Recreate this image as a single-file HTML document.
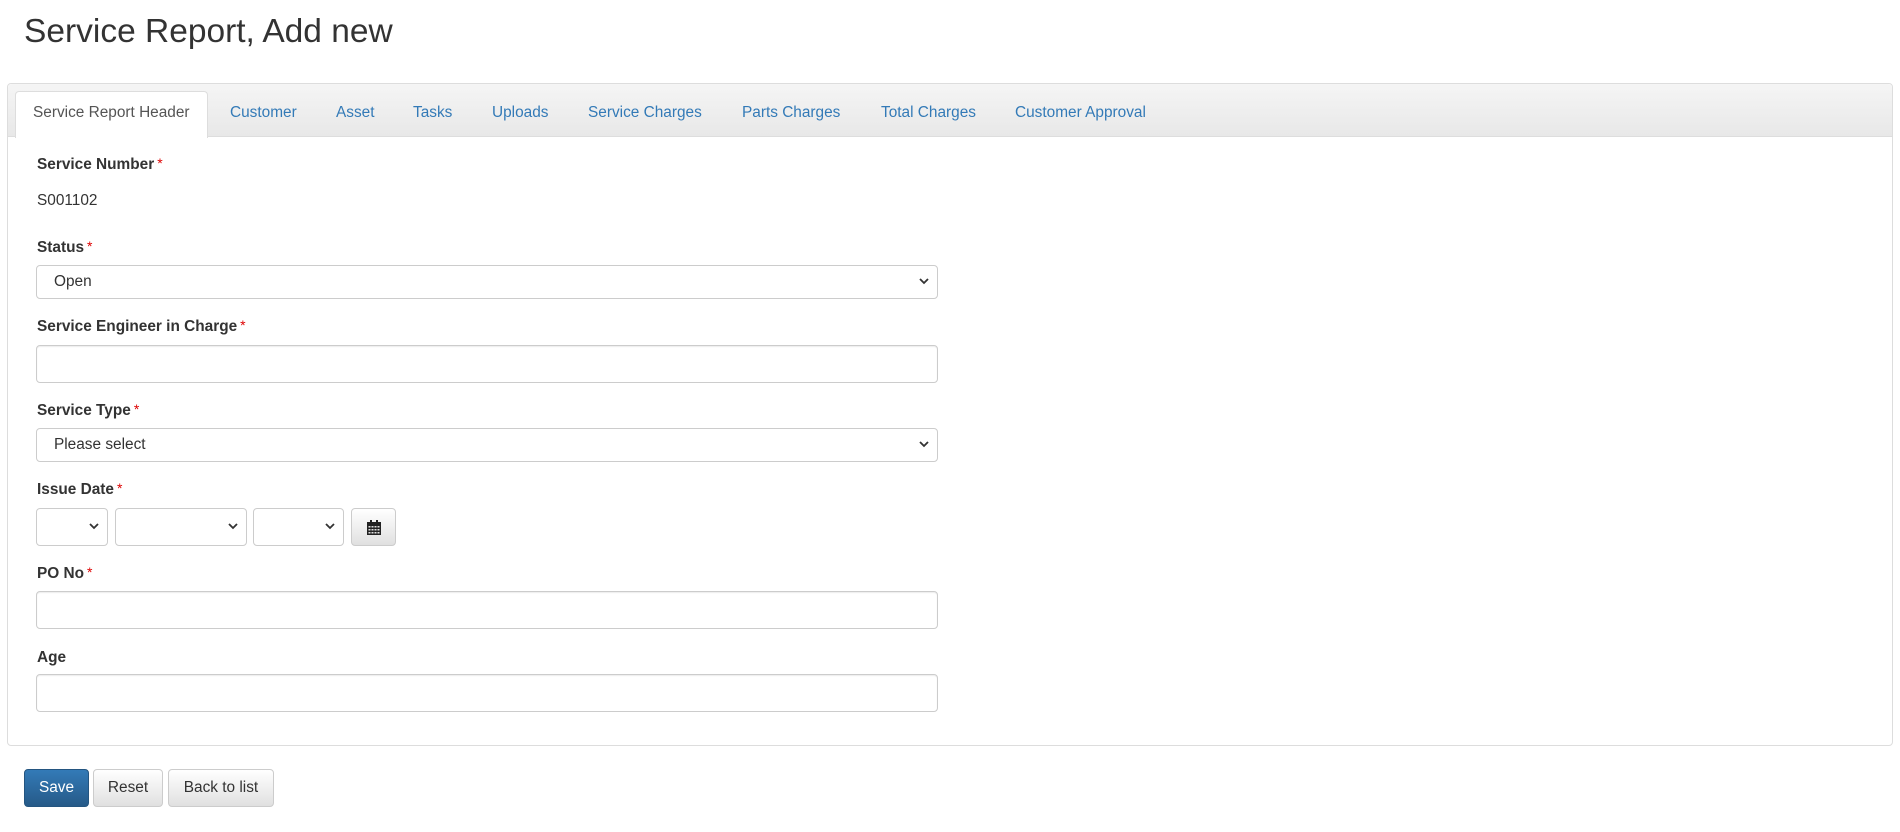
<!DOCTYPE html>
<html><head><meta charset="utf-8"><style>
*{box-sizing:border-box;margin:0;padding:0}
body{width:1900px;height:832px;background:#fff;font-family:"Liberation Sans",Arial,sans-serif;font-size:15.4px;color:#333;position:relative;overflow:hidden}
.a{position:absolute}
h1{position:absolute;left:24px;top:12px;font-size:33.5px;font-weight:normal;color:#333;line-height:40px}
.panel{left:7px;top:83px;width:1886px;height:663px;border:1px solid #ddd;border-radius:4px}
.bar{left:8px;top:84px;width:1884px;height:53px;background:linear-gradient(#f5f5f5,#e8e8e8);border-bottom:1px solid #ddd;border-radius:4px 4px 0 0}
.tab{top:91px;height:47px;background:#fff;border:1px solid #ddd;border-bottom:none;border-radius:4px 4px 0 0;left:15px;width:193px}
.t{top:103px;color:#337ab7;line-height:20px}
.lbl{font-weight:bold;left:37px;line-height:20px}
.lbl i{color:#d00;font-style:normal;font-weight:normal;font-size:14px;vertical-align:top;margin-left:3px;position:relative;top:-2px}
.in{border:1px solid #ccc;border-radius:4px;background:#fff;box-shadow:inset 0 1px 1px rgba(0,0,0,.075)}
.sel{border:1px solid #ccc;border-radius:4px;background:#fff;padding-left:17px;line-height:32px}
.chev{position:absolute;right:8px;top:50%;margin-top:-4px}
.btn{top:769px;height:38px;border-radius:4px;line-height:36px;text-align:center;border:1px solid #ccc;background:linear-gradient(#fff,#e0e0e0);color:#333}
</style></head><body>
<h1>Service Report, Add new</h1>
<div class="a panel"></div>
<div class="a bar"></div>
<div class="a tab"></div>
<div class="a t" style="left:33px;color:#555">Service Report Header</div>
<div class="a t" style="left:230px">Customer</div>
<div class="a t" style="left:336px">Asset</div>
<div class="a t" style="left:413px">Tasks</div>
<div class="a t" style="left:492px">Uploads</div>
<div class="a t" style="left:588px">Service Charges</div>
<div class="a t" style="left:742px">Parts Charges</div>
<div class="a t" style="left:881px">Total Charges</div>
<div class="a t" style="left:1015px">Customer Approval</div>

<div class="a lbl" style="top:155px">Service Number<i>*</i></div>
<div class="a" style="left:37px;top:191px;line-height:20px">S001102</div>

<div class="a lbl" style="top:238px">Status<i>*</i></div>
<div class="a sel" style="left:36px;top:265px;width:902px;height:34px">Open<svg class="chev" width="10" height="7" viewBox="0 0 10 7"><path d="M1 1l4 4 4-4" stroke="#333" stroke-width="1.8" fill="none"/></svg></div>

<div class="a lbl" style="top:317px">Service Engineer in Charge<i>*</i></div>
<div class="a in" style="left:36px;top:345px;width:902px;height:38px"></div>

<div class="a lbl" style="top:401px">Service Type<i>*</i></div>
<div class="a sel" style="left:36px;top:428px;width:902px;height:34px">Please select<svg class="chev" width="10" height="7" viewBox="0 0 10 7"><path d="M1 1l4 4 4-4" stroke="#333" stroke-width="1.8" fill="none"/></svg></div>

<div class="a lbl" style="top:480px">Issue Date<i>*</i></div>
<div class="a sel" style="left:36px;top:508px;width:72px;height:38px"><svg class="chev" width="10" height="7" viewBox="0 0 10 7"><path d="M1 1l4 4 4-4" stroke="#333" stroke-width="1.8" fill="none"/></svg></div>
<div class="a sel" style="left:115px;top:508px;width:132px;height:38px"><svg class="chev" width="10" height="7" viewBox="0 0 10 7"><path d="M1 1l4 4 4-4" stroke="#333" stroke-width="1.8" fill="none"/></svg></div>
<div class="a sel" style="left:253px;top:508px;width:91px;height:38px"><svg class="chev" width="10" height="7" viewBox="0 0 10 7"><path d="M1 1l4 4 4-4" stroke="#333" stroke-width="1.8" fill="none"/></svg></div>
<div class="a btn" style="left:351px;top:508px;width:45px;height:38px"><svg style="margin-top:11px" width="14" height="15" viewBox="0 0 14 15"><rect x="3" y="0" width="2" height="3" fill="#222"/><rect x="9" y="0" width="2" height="3" fill="#222"/><rect x="0" y="2" width="14" height="13" fill="#222"/><g fill="#ddd"><rect x="1.5" y="6" width="2" height="1.5"/><rect x="4.5" y="6" width="2" height="1.5"/><rect x="7.5" y="6" width="2" height="1.5"/><rect x="10.5" y="6" width="2" height="1.5"/><rect x="1.5" y="9" width="2" height="1.5"/><rect x="4.5" y="9" width="2" height="1.5"/><rect x="7.5" y="9" width="2" height="1.5"/><rect x="10.5" y="9" width="2" height="1.5"/><rect x="1.5" y="12" width="2" height="1.5"/><rect x="4.5" y="12" width="2" height="1.5"/><rect x="7.5" y="12" width="2" height="1.5"/><rect x="10.5" y="12" width="2" height="1.5"/></g></svg></div>

<div class="a lbl" style="top:564px">PO No<i>*</i></div>
<div class="a in" style="left:36px;top:591px;width:902px;height:38px"></div>

<div class="a lbl" style="top:648px">Age</div>
<div class="a in" style="left:36px;top:674px;width:902px;height:38px"></div>

<div class="a btn" style="left:24px;width:65px;background:linear-gradient(#337ab7,#265a88);border-color:#245580;color:#fff">Save</div>
<div class="a btn" style="left:93px;width:70px">Reset</div>
<div class="a btn" style="left:168px;width:106px">Back to list</div>
</body></html>
